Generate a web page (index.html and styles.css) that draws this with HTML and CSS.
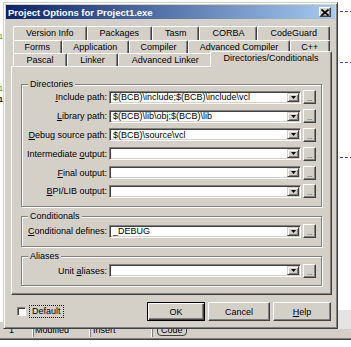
FILE: index.html
```html
<!DOCTYPE html>
<html>
<head>
  <link rel="stylesheet" href="styles.css">
</head>
<body>
  <div class="desktop">
    <!-- editor text peeking out on the left -->
    <div class="gutter">
      <span class="frag frag-blue frag-1">y.</span>
      <span class="frag frag-green frag-2">01</span>
      <span class="frag frag-blue frag-3">y.</span>
      <span class="frag frag-green frag-4">01</span>
      <span class="frag frag-bold frag-5">a1</span>
      <span class="frag frag-blue frag-6">y.</span>
    </div>

    <div class="dialog">
      <div class="titlebar">
        <span class="title">Project Options for Project1.exe</span>
        <span class="close-btn">
          <svg width="8" height="7" viewBox="0 0 8 7">
            <path d="M0.5 0.5 L7.5 6.5 M7.5 0.5 L0.5 6.5" stroke="#000" stroke-width="1.6"/>
          </svg>
        </span>
      </div>

      <div class="tabs">
        <div class="tab-row">
          <div class="tab">Version Info</div>
          <div class="tab">Packages</div>
          <div class="tab">Tasm</div>
          <div class="tab">CORBA</div>
          <div class="tab">CodeGuard</div>
        </div>
        <div class="tab-row">
          <div class="tab">Forms</div>
          <div class="tab">Application</div>
          <div class="tab">Compiler</div>
          <div class="tab">Advanced Compiler</div>
          <div class="tab">C++</div>
        </div>
        <div class="tab-row">
          <div class="tab">Pascal</div>
          <div class="tab">Linker</div>
          <div class="tab">Advanced Linker</div>
          <div class="tab tab-active">Directories/Conditionals</div>
        </div>
      </div>

      <div class="sheet">
        <div class="group">
          <span class="group-title">Directories</span>
          <div class="field">
            <span class="field-label"><u>I</u>nclude path:</span>
            <div class="combo">
              <span class="combo-text">$(BCB)\include;$(BCB)\include\vcl</span>
              <span class="combo-btn"><svg width="5" height="3" viewBox="0 0 5 3"><path d="M0 0 H5 L2.5 3 Z" fill="#000"/></svg></span>
            </div>
            <button class="browse">...</button>
          </div>
          <div class="field">
            <span class="field-label"><u>L</u>ibrary path:</span>
            <div class="combo">
              <span class="combo-text">$(BCB)\lib\obj;$(BCB)\lib</span>
              <span class="combo-btn"><svg width="5" height="3" viewBox="0 0 5 3"><path d="M0 0 H5 L2.5 3 Z" fill="#000"/></svg></span>
            </div>
            <button class="browse">...</button>
          </div>
          <div class="field">
            <span class="field-label"><u>D</u>ebug source path:</span>
            <div class="combo">
              <span class="combo-text">$(BCB)\source\vcl</span>
              <span class="combo-btn"><svg width="5" height="3" viewBox="0 0 5 3"><path d="M0 0 H5 L2.5 3 Z" fill="#000"/></svg></span>
            </div>
            <button class="browse">...</button>
          </div>
          <div class="field">
            <span class="field-label">Intermediate <u>o</u>utput:</span>
            <div class="combo">
              <span class="combo-text"></span>
              <span class="combo-btn"><svg width="5" height="3" viewBox="0 0 5 3"><path d="M0 0 H5 L2.5 3 Z" fill="#000"/></svg></span>
            </div>
            <button class="browse">...</button>
          </div>
          <div class="field">
            <span class="field-label"><u>F</u>inal output:</span>
            <div class="combo">
              <span class="combo-text"></span>
              <span class="combo-btn"><svg width="5" height="3" viewBox="0 0 5 3"><path d="M0 0 H5 L2.5 3 Z" fill="#000"/></svg></span>
            </div>
            <button class="browse">...</button>
          </div>
          <div class="field">
            <span class="field-label"><u>B</u>PI/LIB output:</span>
            <div class="combo">
              <span class="combo-text"></span>
              <span class="combo-btn"><svg width="5" height="3" viewBox="0 0 5 3"><path d="M0 0 H5 L2.5 3 Z" fill="#000"/></svg></span>
            </div>
            <button class="browse">...</button>
          </div>
        </div>

        <div class="group group-short">
          <span class="group-title">Conditionals</span>
          <div class="field">
            <span class="field-label"><u>C</u>onditional defines:</span>
            <div class="combo">
              <span class="combo-text">_DEBUG</span>
              <span class="combo-btn"><svg width="5" height="3" viewBox="0 0 5 3"><path d="M0 0 H5 L2.5 3 Z" fill="#000"/></svg></span>
            </div>
            <button class="browse">...</button>
          </div>
        </div>

        <div class="group group-short">
          <span class="group-title">Aliases</span>
          <div class="field">
            <span class="field-label">Unit <u>a</u>liases:</span>
            <div class="combo">
              <span class="combo-text"></span>
              <span class="combo-btn"><svg width="5" height="3" viewBox="0 0 5 3"><path d="M0 0 H5 L2.5 3 Z" fill="#000"/></svg></span>
            </div>
            <button class="browse">...</button>
          </div>
        </div>
      </div>

      <div class="footer">
        <div class="check">
          <span class="check-box"></span>
          <span class="check-label">Default</span>
        </div>
        <div class="buttons">
          <button class="btn btn-default">OK</button>
          <button class="btn btn-wide">Cancel</button>
          <button class="btn"><u>H</u>elp</button>
        </div>
      </div>
    </div>

    <!-- editor margin on the right -->
    <div class="margin-area">
      <div class="dash dash-1"></div>
      <div class="dash dash-2"></div>
      <div class="dash dash-3"></div>
      <div class="margin-shade"></div>
    </div>
  </div>

  <div class="statusbar">
    <span class="panel panel-pos">1</span>
    <span class="panel panel-mod">Modified</span>
    <span class="panel panel-ins">Insert</span>
    <span class="panel panel-code"><span class="code-tab">Code</span></span>
  </div>
</body>
</html>
```

FILE: styles.css
```css
* {
  box-sizing: border-box;
}
body {
  margin: 0;
  width: 351px;
  height: 347px;
  overflow: hidden;
  background: #fff;
  font-family: 'Liberation Sans', Arial, sans-serif;
  font-size: 9px;
  color: #000;
}
u {
  text-decoration: underline;
}
.desktop {
  display: flex;
  align-items: flex-start;
  padding-top: 2px;
  height: 329px;
}

/* left editor gutter */
.gutter {
  width: 3px;
  height: 327px;
  overflow: hidden;
  display: flex;
  flex-direction: column;
}
.frag {
  display: block;
  height: 6px;
  line-height: 6px;
  font-size: 7px;
  margin-left: -5px;
  white-space: nowrap;
}
.frag-blue { color: #5a6aa0; }
.frag-green { color: #2e8b2e; }
.frag-bold { font-weight: bold; }
.frag-1 { margin-top: 7px; }
.frag-2 { margin-top: 19px; }
.frag-3 { margin-top: 16px; }
.frag-4 { margin-top: 24px; }
.frag-5 { margin-top: 5px; }
.frag-6 { margin-top: 47px; }

/* dialog window */
.dialog {
  position: relative;
  z-index: 1;
  width: 335px;
  height: 327px;
  background: #d4d0c8;
  border: 1px solid;
  border-color: #d4d0c8 #404040 #404040 #d4d0c8;
  box-shadow: inset 1px 1px #fff, inset -1px -1px #808080;
  padding: 2px;
  display: flex;
  flex-direction: column;
}
.titlebar {
  height: 14px;
  display: flex;
  align-items: center;
  justify-content: space-between;
  padding: 0 4px 0 2px;
  background: linear-gradient(90deg, #0a246a, #a6caf0);
}
.title {
  color: #fff;
  font-weight: bold;
  font-size: 9.5px;
  white-space: nowrap;
}
.close-btn {
  width: 12px;
  height: 10px;
  display: flex;
  align-items: center;
  justify-content: center;
  background: #d4d0c8;
  border: 1px solid;
  border-color: #fff #404040 #404040 #fff;
  box-shadow: inset -1px -1px #808080;
}

/* tabs */
.tabs {
  margin: 7px 5px 0 7px;
  display: flex;
  flex-direction: column;
}
.tab-row {
  display: flex;
  height: 13px;
}
.tab-row:first-child {
  height: 14px;
}
.tab {
  flex: 1 1 auto;
  text-align: center;
  white-space: nowrap;
  line-height: 12px;
  border-top: 1px solid #fff;
  border-left: 1px solid #fff;
  border-right: 1px solid #404040;
  box-shadow: inset -1px 0 #808080;
  border-radius: 2px 2px 0 0;
  background: #d4d0c8;
}
.tab-active {
  position: relative;
  z-index: 2;
  margin: -2px -2px -1px -2px;
  line-height: 13px;
  padding-bottom: 1px;
}

/* tab sheet */
.sheet {
  margin: 0 3px 0 5px;
  height: 229px;
  border: 1px solid;
  border-color: #fff #404040 #404040 #fff;
  box-shadow: inset -1px -1px #808080;
  padding: 17px 9px 0 9px;
  display: flex;
  flex-direction: column;
  gap: 9px;
}
.group {
  border: 1px solid #808080;
  box-shadow: inset 1px 1px #fff, 1px 1px #fff;
  padding: 0 5px 5px 0;
}
.group-title {
  display: block;
  width: max-content;
  height: 11px;
  line-height: 11px;
  margin: -6px 0 -2px 6px;
  padding: 0 2px;
  background: #d4d0c8;
}
.group-short .group-title {
  margin-bottom: 0;
}
.field {
  display: flex;
  align-items: center;
  height: 18.8px;
}
.field-label {
  width: 87px;
  text-align: right;
  padding-right: 2px;
  white-space: nowrap;
}
.combo {
  flex: 1;
  height: 13px;
  display: flex;
  align-items: center;
  background: #fff;
  border: 1px solid;
  border-color: #808080 #fff #fff #808080;
  box-shadow: inset 1px 1px #404040, inset -1px -1px #d4d0c8;
  padding: 1px;
}
.combo-text {
  flex: 1;
  padding-left: 2px;
  white-space: nowrap;
  overflow: hidden;
  line-height: 10px;
}
.combo-btn {
  width: 12px;
  height: 9px;
  display: flex;
  align-items: center;
  justify-content: center;
  background: #d4d0c8;
  border: 1px solid;
  border-color: #d4d0c8 #404040 #404040 #d4d0c8;
  box-shadow: inset 1px 1px #fff, inset -1px -1px #808080;
}
.browse {
  width: 13px;
  height: 14px;
  margin-left: 2px;
  padding: 4px 0 0;
  font-family: inherit;
  font-size: 8px;
  line-height: 8px;
  letter-spacing: -0.5px;
  color: #444;
  background: #d4d0c8;
  border: 1px solid;
  border-color: #fff #404040 #404040 #fff;
  box-shadow: inset -1px -1px #808080;
}

/* bottom row */
.footer {
  flex: 1;
  display: flex;
  align-items: center;
  padding: 2px 4px 0 11px;
}
.check {
  display: flex;
  align-items: center;
}
.check-box {
  width: 9px;
  height: 9px;
  background: #fff;
  border: 1px solid;
  border-color: #808080 #fff #fff #808080;
  box-shadow: inset 1px 1px #404040;
}
.check-label {
  margin-left: 3px;
  padding: 1px 2px;
  border: 1px dotted #000;
  line-height: 9px;
}
.buttons {
  margin-left: auto;
  display: flex;
  gap: 3px;
}
.btn {
  width: 58px;
  height: 19px;
  padding: 0;
  font-family: inherit;
  font-size: 9px;
  color: #000;
  background: #d4d0c8;
  border: 1px solid;
  border-color: #fff #404040 #404040 #fff;
  box-shadow: inset -1px -1px #808080;
}
.btn-wide {
  width: 62px;
}
.btn-default {
  border: 1px solid #000;
  box-shadow: inset 1px 1px #fff, inset -1px -1px #404040, inset -2px -2px #808080;
}

/* editor margin on the right */
.margin-area {
  flex: 1;
  height: 327px;
  display: flex;
  flex-direction: column;
}
.dash {
  height: 1px;
  margin-left: 2px;
  background: repeating-linear-gradient(90deg, #4a4ab0 0 3px, transparent 3px 5px);
}
.dash-1 { margin-top: 9px; }
.dash-2 { margin-top: 50px; }
.dash-3 { margin-top: 94px; }
.margin-shade {
  margin-top: 152px;
  height: 19px;
  background: #e4e4e4;
}

/* status bar under the dialog */
.statusbar {
  margin-top: -7px;
  height: 17px;
  display: flex;
  align-items: center;
  background: #d4d0c8;
  border-bottom: 1px solid #808080;
  box-shadow: 0 1px #404040;
}
.panel {
  height: 14px;
  line-height: 14px;
  border-right: 1px solid #fff;
  box-shadow: 1px 0 #808080;
  white-space: nowrap;
}
.panel-pos {
  width: 33px;
  padding-left: 9px;
}
.panel-mod {
  width: 57px;
  padding-left: 2px;
}
.panel-ins {
  width: 62px;
  padding-left: 3px;
}
.panel-code {
  flex: 1;
  padding-left: 5px;
  border-right: none;
  box-shadow: none;
}
.code-tab {
  padding: 0 3px;
  border: 1px solid #404040;
  border-radius: 4px;
}
```
